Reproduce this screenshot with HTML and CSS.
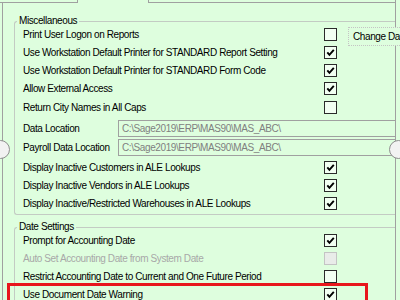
FILE: index.html
```html
<!DOCTYPE html>
<html>
<head>
<meta charset="utf-8">
<link rel="stylesheet" href="styles.css">
</head>
<body>
<div class="tabstrip"><div class="tab tab-left"></div><div class="tab tab-active"></div><div class="tab tab-right"></div></div>
<div class="panel">
  <div class="group">
    <div class="group-title">Miscellaneous</div>
    <div class="row"><span class="label">Print User Logon on Reports</span><span class="cb"></span><div class="change-btn">Change Da</div></div>
    <div class="row"><span class="label">Use Workstation Default Printer for STANDARD Report Setting</span><span class="cb"><svg viewBox="0 0 11 11" width="11" height="11"><path d="M2.3 5.4 L4.4 7.8 L8.8 2.8" fill="none" stroke="#000" stroke-width="1.9"/></svg></span></div>
    <div class="row"><span class="label">Use Workstation Default Printer for STANDARD Form Code</span><span class="cb"><svg viewBox="0 0 11 11" width="11" height="11"><path d="M2.3 5.4 L4.4 7.8 L8.8 2.8" fill="none" stroke="#000" stroke-width="1.9"/></svg></span></div>
    <div class="row"><span class="label">Allow External Access</span><span class="cb"><svg viewBox="0 0 11 11" width="11" height="11"><path d="M2.3 5.4 L4.4 7.8 L8.8 2.8" fill="none" stroke="#000" stroke-width="1.9"/></svg></span></div>
    <div class="row"><span class="label">Return City Names in All Caps</span><span class="cb"></span></div>
    <div class="fields">
      <div class="field-row"><span class="label">Data Location</span><div class="field">C:\Sage2019\ERP\MAS90\MAS_ABC\</div></div>
      <div class="field-row"><span class="label">Payroll Data Location</span><div class="field">C:\Sage2019\ERP\MAS90\MAS_ABC\</div></div>
    </div>
    <div class="row"><span class="label">Display Inactive Customers in ALE Lookups</span><span class="cb"><svg viewBox="0 0 11 11" width="11" height="11"><path d="M2.3 5.4 L4.4 7.8 L8.8 2.8" fill="none" stroke="#000" stroke-width="1.9"/></svg></span></div>
    <div class="row"><span class="label">Display Inactive Vendors in ALE Lookups</span><span class="cb"><svg viewBox="0 0 11 11" width="11" height="11"><path d="M2.3 5.4 L4.4 7.8 L8.8 2.8" fill="none" stroke="#000" stroke-width="1.9"/></svg></span></div>
    <div class="row"><span class="label">Display Inactive/Restricted Warehouses in ALE Lookups</span><span class="cb"><svg viewBox="0 0 11 11" width="11" height="11"><path d="M2.3 5.4 L4.4 7.8 L8.8 2.8" fill="none" stroke="#000" stroke-width="1.9"/></svg></span></div>
  </div>
  <div class="group">
    <div class="group-title">Date Settings</div>
    <div class="row"><span class="label">Prompt for Accounting Date</span><span class="cb"><svg viewBox="0 0 11 11" width="11" height="11"><path d="M2.3 5.4 L4.4 7.8 L8.8 2.8" fill="none" stroke="#000" stroke-width="1.9"/></svg></span></div>
    <div class="row"><span class="label disabled">Auto Set Accounting Date from System Date</span><span class="cb cb-disabled"></span></div>
    <div class="row"><span class="label">Restrict Accounting Date to Current and One Future Period</span><span class="cb"></span></div>
    <div class="row"><span class="label">Use Document Date Warning</span><span class="cb"><svg viewBox="0 0 11 11" width="11" height="11"><path d="M2.3 5.4 L4.4 7.8 L8.8 2.8" fill="none" stroke="#000" stroke-width="1.9"/></svg></span></div>
  </div>
</div>
<div class="highlight"></div>
<div class="knob knob-left"></div>
<div class="knob knob-right"></div>
</body>
</html>
```

FILE: styles.css
```css
html, body {
  margin: 0;
  padding: 0;
  width: 400px;
  height: 300px;
  overflow: hidden;
  background: #defede;
}
body {
  position: relative;
  font-family: "Liberation Sans", Arial, sans-serif;
  font-size: 10px;
  letter-spacing: -0.4px;
  color: #000;
}
.tabstrip {
  display: flex;
  width: 396px;
  height: 3px;
}
.tab {
  box-sizing: border-box;
  height: 3px;
}
.tab-left {
  width: 78px;
  border-right: 1px solid #a0a0a0;
  border-bottom: 1px solid #a0a0a0;
}
.tab-active {
  width: 70px;
}
.tab-right {
  flex: 1;
  border-left: 1px solid #a0a0a0;
  border-bottom: 1px solid #a0a0a0;
  border-right: 1px solid #a0a0a0;
}
.panel {
  margin-left: 2px;
  width: 381px;
  height: 279px;
  padding: 18px 0 0 11px;
  border-left: 1px solid #a0a0a0;
  border-right: 1px solid #a0a0a0;
}
.group {
  border: 1px solid #c3cbc3;
  border-right: none;
  border-radius: 3px 0 0 3px;
  padding: 0 0 1px 8px;
  margin-right: 0;
}
.group + .group {
  margin-top: 12px;
}
.group-title {
  width: max-content;
  margin: -8px 0 -2px -6px;
  padding: 0 2px;
  line-height: 13px;
  background: #defede;
}
.row {
  display: grid;
  grid-template-columns: 301px 13px auto;
  align-items: center;
  height: 18.25px;
  white-space: nowrap;
}
.label {
  white-space: nowrap;
}
.disabled {
  color: #a8a8a8;
}
.cb {
  box-sizing: border-box;
  width: 13px;
  height: 13px;
  border: 1px solid #2a2a2a;
  background: #f2fff2;
  display: flex;
}
.cb-disabled {
  border-color: #c4c4c4;
  background: #e9ece9;
}
.change-btn {
  align-self: start;
  position: relative;
  z-index: 1;
  box-sizing: border-box;
  width: 52px;
  height: 19px;
  margin: 2px 0 -3px 11px;
  padding-left: 4px;
  border: 1px dotted #c4c4c4;
  border-right: none;
  background: #defede;
  line-height: 17px;
  white-space: nowrap;
}
.fields {
  padding: 3px 0 1px;
}
.field-row {
  display: grid;
  grid-template-columns: 95px 1fr;
  align-items: center;
  height: 19px;
}
.field {
  box-sizing: border-box;
  height: 17px;
  border: 1px solid #a0a0a0;
  border-right: none;
  padding-left: 3px;
  line-height: 15px;
  color: #808080;
  white-space: nowrap;
  overflow: hidden;
}
.highlight {
  position: absolute;
  left: 7px;
  top: 283px;
  width: 361px;
  height: 17px;
  box-sizing: border-box;
  border: 3px solid #e8161c;
  border-bottom: none;
}
.knob {
  position: absolute;
  top: 140px;
  width: 17px;
  height: 17px;
  border-radius: 50%;
  border: 1px solid #8e8e8e;
  background: #f2f2f2;
}
.knob-left {
  left: -9px;
}
.knob-right {
  left: 389px;
}
```
